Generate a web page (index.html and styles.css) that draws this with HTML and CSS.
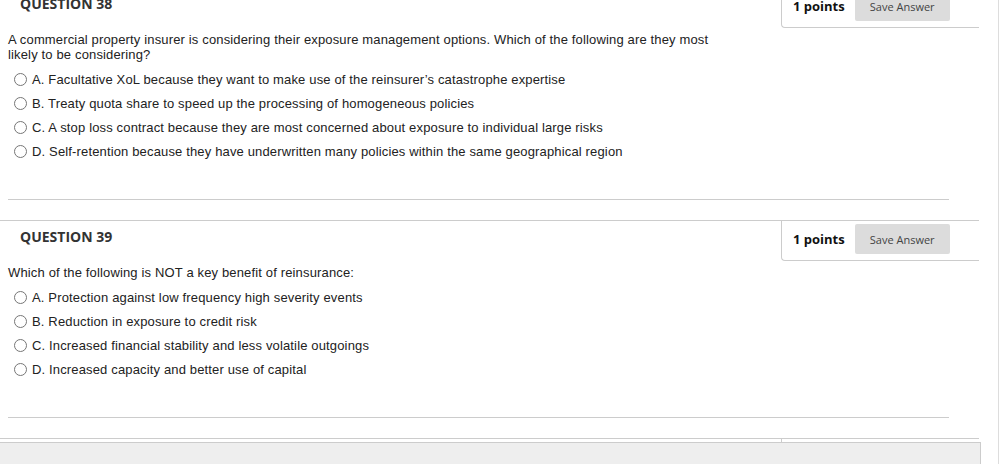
FILE: index.html
```html
<!DOCTYPE html>
<html lang="en">
<head>
  <meta charset="UTF-8" />
  <meta name="viewport" content="width=device-width, initial-scale=1.0"/>
  <title>Test</title>
  <link rel="stylesheet" href="styles.css">
</head>
<body>
  <div class="page">

    <div class="question first">
      <div class="q-head">
        <h3 class="q-title">QUESTION 38</h3>
        <div class="points-box">
          <span class="points">1 points</span>
          <button class="save-btn">Save Answer</button>
        </div>
      </div>
      <div class="q-body">
        <p class="q-text">A commercial property insurer is considering their exposure management options. Which of the following are they most likely to be considering?</p>
        <ul class="options">
          <li><input type="radio" name="q38" id="q38a"><label for="q38a">A. Facultative XoL because they want to make use of the reinsurer’s catastrophe expertise</label></li>
          <li><input type="radio" name="q38" id="q38b"><label for="q38b">B. Treaty quota share to speed up the processing of homogeneous policies</label></li>
          <li><input type="radio" name="q38" id="q38c"><label for="q38c">C. A stop loss contract because they are most concerned about exposure to individual large risks</label></li>
          <li><input type="radio" name="q38" id="q38d"><label for="q38d">D. Self-retention because they have underwritten many policies within the same geographical region</label></li>
        </ul>
      </div>
      <hr class="q-sep">
    </div>

    <div class="question">
      <div class="q-head">
        <h3 class="q-title">QUESTION 39</h3>
        <div class="points-box">
          <span class="points">1 points</span>
          <button class="save-btn">Save Answer</button>
        </div>
      </div>
      <div class="q-body">
        <p class="q-text">Which of the following is NOT a key benefit of reinsurance:</p>
        <ul class="options">
          <li><input type="radio" name="q39" id="q39a"><label for="q39a">A. Protection against low frequency high severity events</label></li>
          <li><input type="radio" name="q39" id="q39b"><label for="q39b">B. Reduction in exposure to credit risk</label></li>
          <li><input type="radio" name="q39" id="q39c"><label for="q39c">C. Increased financial stability and less volatile outgoings</label></li>
          <li><input type="radio" name="q39" id="q39d"><label for="q39d">D. Increased capacity and better use of capital</label></li>
        </ul>
      </div>
      <hr class="q-sep">
    </div>

    <!-- next question, mostly under the footer bar -->
    <div class="question">
      <div class="q-head">
        <div class="points-box stub"></div>
      </div>
    </div>

  </div>

  <div class="footer-bar"></div>
</body>
</html>
```

FILE: styles.css
```css
body {
  margin: 0;
  font-family: 'Liberation Sans', Arial, sans-serif;
  color: #222;
  background: #fff;
  overflow: hidden;
}

.page {
  width: 998px;
  min-height: 100vh;
  border-right: 1px solid #ddd;
}

.question {
  width: 979px;
}

.question.first {
  margin-top: -13px;
}

.q-head {
  display: flex;
  justify-content: space-between;
  align-items: flex-start;
  border-top: 1px solid #ccc;
}

.q-title {
  margin: 0;
  padding: 6px 0 0 20px;
  font-family: 'Open Sans', sans-serif;
  font-size: 14px;
  font-weight: bold;
  line-height: 19px;
  color: #333;
  white-space: nowrap;
}

.points-box {
  display: flex;
  flex-shrink: 0;
  align-items: center;
  gap: 10px;
  width: 156px;
  height: 30px;
  padding: 3px 30px 6px 11px;
  border-left: 1px solid #ccc;
  border-bottom: 1px solid #ccc;
  border-bottom-left-radius: 4px;
}

.points-box.stub {
  margin-left: auto;
}

.points {
  flex-shrink: 0;
  font-family: 'Open Sans', sans-serif;
  font-size: 13px;
  font-weight: bold;
  color: #111;
  white-space: nowrap;
}

.save-btn {
  flex-shrink: 0;
  width: 95px;
  height: 30px;
  padding: 0;
  border: none;
  border-radius: 2px;
  background-color: #dcdcdc;
  font-family: 'Open Sans', sans-serif;
  font-size: 11px;
  color: #444;
  white-space: nowrap;
}

.q-body {
  padding: 4px 8px 0;
}

.q-text {
  margin: 0;
  max-width: 715px;
  font-size: 13px;
  line-height: 15px;
  letter-spacing: 0.15px;
}

.options {
  list-style: none;
  margin: 5px 0 0;
  padding: 0;
}

.options li {
  display: flex;
  align-items: center;
  height: 24px;
  font-size: 13px;
  letter-spacing: 0.15px;
}

.options input {
  width: 13px;
  height: 13px;
  margin: 0 5px 0 6px;
}

.q-sep {
  margin: 36px 30px 20px 8px;
  border: none;
  border-top: 1px solid #ccc;
}

.footer-bar {
  position: fixed;
  left: 0;
  bottom: 0;
  width: 980px;
  height: 21px;
  background-color: #eee;
  border-top: 1px solid #ccc;
  border-right: 1px solid #ccc;
}
```
